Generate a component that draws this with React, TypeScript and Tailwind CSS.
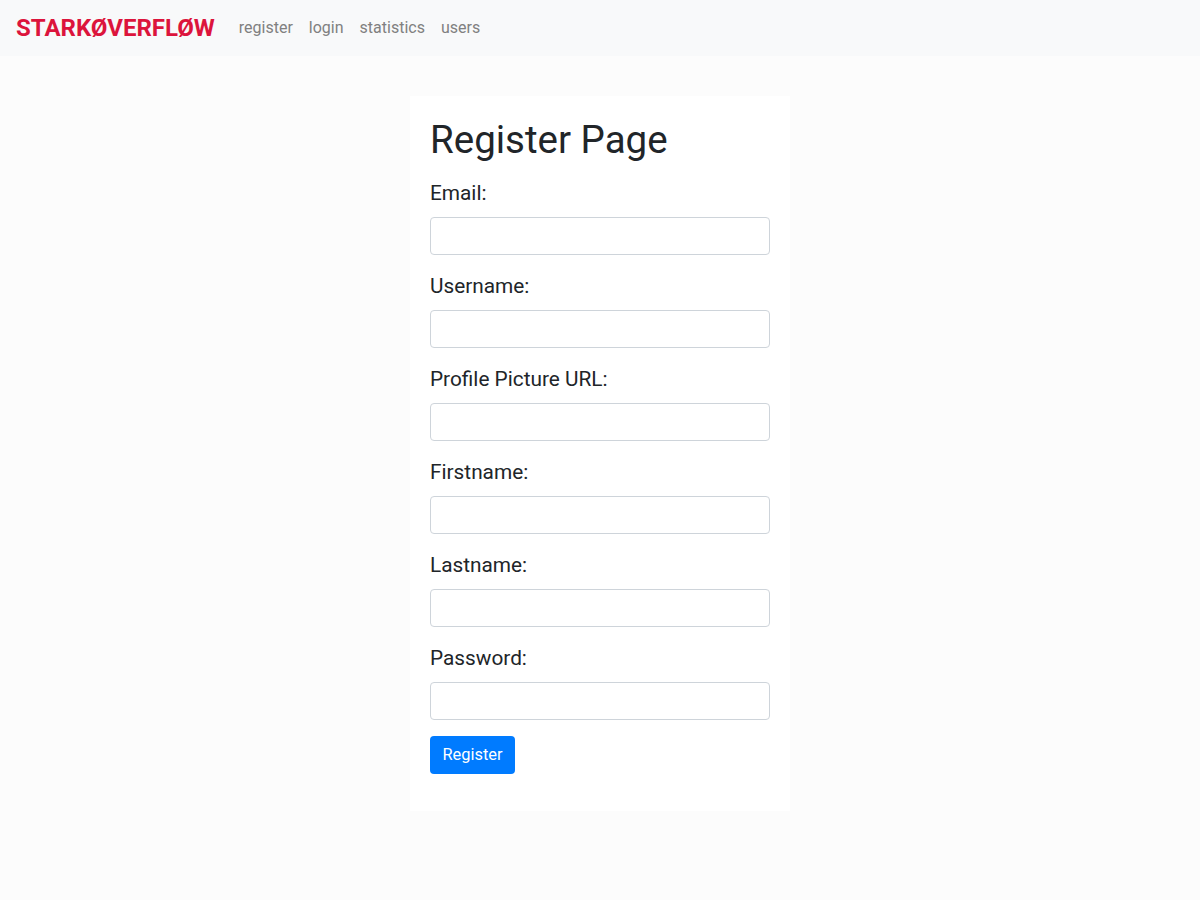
import React from 'react';

const fields = ['Email:', 'Username:', 'Profile Picture URL:', 'Firstname:', 'Lastname:', 'Password:'];

export default function App() {
  return (
    <div className="min-h-[900px] bg-[#fcfcfc] text-[#212529]" style={{ fontFamily: 'Roboto, "Liberation Sans", sans-serif' }}>
      <nav className="flex h-[56px] items-center bg-[#f8f9fa] px-4">
        <span className="mr-4 text-[24px] font-bold leading-[30px] text-[#dc143c]">STARKØVERFLØW</span>
        <div className="flex">
          {['register', 'login', 'statistics', 'users'].map((l) => (
            <a key={l} className="px-2 py-2 text-base leading-6 text-[#808080]">
              {l}
            </a>
          ))}
        </div>
      </nav>
      <div className="flex justify-center pt-10">
        <div className="w-[380px] bg-white p-5">
          <h1 className="mb-[14px] text-[38.5px] font-normal leading-[48px]">Register Page</h1>
          {fields.map((f) => (
            <div key={f} className="mb-4">
              <label className="mb-[9px] block text-[20.8px] leading-[30px]">{f}</label>
              <input
                type={f === 'Password:' ? 'password' : 'text'}
                className="block h-[38px] w-full rounded-[4px] border border-[#ced4da] bg-white px-3"
              />
            </div>
          ))}
          <button className="mb-[17px] h-[38px] w-[85px] rounded-[4px] bg-[#007bff] text-[16.4px] text-white">Register</button>
        </div>
      </div>
    </div>
  );
}
